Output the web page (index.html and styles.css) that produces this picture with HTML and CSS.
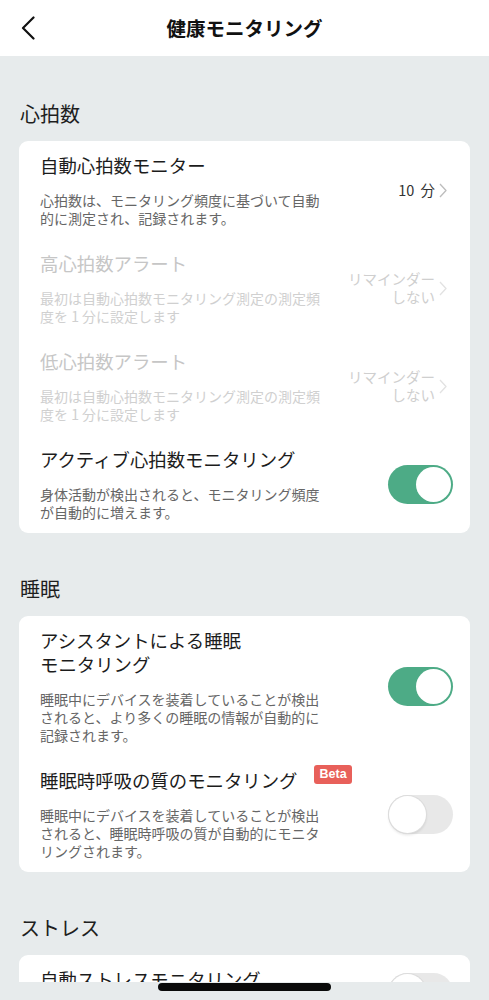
FILE: index.html
```html
<!DOCTYPE html>
<html lang="ja">
<head>
<meta charset="utf-8">
<title>健康モニタリング</title>
<link rel="stylesheet" href="styles.css">
</head>
<body>
<div class="page">
  <header class="topbar">
    <span class="back">
      <svg width="14" height="24" viewBox="0 0 14 24"><path d="M12.5 1.5 L2 12 L12.5 22.5" fill="none" stroke="#111" stroke-width="2.2" stroke-linecap="round" stroke-linejoin="round"/></svg>
    </span>
    <h1 class="title">健康モニタリング</h1>
  </header>

  <main class="content">
    <section class="section">
      <h2 class="section-title">心拍数</h2>
      <div class="card">
        <div class="item">
          <div class="item-main">
            <div class="item-title">自動心拍数モニター</div>
            <div class="item-desc">心拍数は、モニタリング頻度に基づいて自動的に測定され、記録されます。</div>
          </div>
          <div class="item-side">
            <span class="value">10 分</span>
            <svg class="chev" width="8" height="15" viewBox="0 0 8 15"><path d="M1 1 L7 7.5 L1 14" fill="none" stroke="#bdbdbd" stroke-width="1.3" stroke-linejoin="round"/></svg>
          </div>
        </div>
        <div class="item disabled">
          <div class="item-main">
            <div class="item-title">高心拍数アラート</div>
            <div class="item-desc">最初は自動心拍数モニタリング測定の測定頻度を 1 分に設定します</div>
          </div>
          <div class="item-side">
            <span class="value two">リマインダー<br>しない</span>
            <svg class="chev" width="8" height="15" viewBox="0 0 8 15"><path d="M1 1 L7 7.5 L1 14" fill="none" stroke="#e2e2e2" stroke-width="1.3" stroke-linejoin="round"/></svg>
          </div>
        </div>
        <div class="item disabled">
          <div class="item-main">
            <div class="item-title">低心拍数アラート</div>
            <div class="item-desc">最初は自動心拍数モニタリング測定の測定頻度を 1 分に設定します</div>
          </div>
          <div class="item-side">
            <span class="value two">リマインダー<br>しない</span>
            <svg class="chev" width="8" height="15" viewBox="0 0 8 15"><path d="M1 1 L7 7.5 L1 14" fill="none" stroke="#e2e2e2" stroke-width="1.3" stroke-linejoin="round"/></svg>
          </div>
        </div>
        <div class="item">
          <div class="item-main">
            <div class="item-title">アクティブ心拍数モニタリング</div>
            <div class="item-desc">身体活動が検出されると、モニタリング頻度が自動的に増えます。</div>
          </div>
          <div class="item-side">
            <span class="toggle on"><span class="knob"></span></span>
          </div>
        </div>
      </div>
    </section>

    <section class="section">
      <h2 class="section-title">睡眠</h2>
      <div class="card">
        <div class="item">
          <div class="item-main">
            <div class="item-title">アシスタントによる睡眠<br>モニタリング</div>
            <div class="item-desc">睡眠中にデバイスを装着していることが検出されると、より多くの睡眠の情報が自動的に記録されます。</div>
          </div>
          <div class="item-side">
            <span class="toggle on"><span class="knob"></span></span>
          </div>
        </div>
        <div class="item">
          <div class="item-main">
            <div class="item-title">睡眠時呼吸の質のモニタリング<span class="badge">Beta</span></div>
            <div class="item-desc">睡眠中にデバイスを装着していることが検出されると、睡眠時呼吸の質が自動的にモニタリングされます。</div>
          </div>
          <div class="item-side">
            <span class="toggle"><span class="knob"></span></span>
          </div>
        </div>
      </div>
    </section>

    <section class="section">
      <h2 class="section-title">ストレス</h2>
      <div class="card">
        <div class="item item-last">
          <div class="item-main">
            <div class="item-title">自動ストレスモニタリング</div>
          </div>
          <div class="item-side">
            <span class="toggle"><span class="knob"></span></span>
          </div>
        </div>
      </div>
    </section>
  </main>

  <div class="home-bar"><span class="home-indicator"></span></div>
</div>
</body>
</html>
```

FILE: styles.css
```css
* {
  box-sizing: border-box;
}

html, body {
  margin: 0;
  padding: 0;
  height: 100%;
  overflow: hidden;
}

body {
  background: #e7ebec;
  font-family: "Noto Sans CJK JP", "Noto Sans", sans-serif;
  color: #1c1c1c;
}

.page {
  height: 1000px;
  overflow: hidden;
}

.topbar {
  height: 56px;
  background: #ffffff;
  display: flex;
  align-items: center;
  justify-content: center;
  position: relative;
}

.back {
  position: absolute;
  left: 21px;
  top: 16px;
  width: 14px;
  height: 24px;
  display: flex;
}

.title {
  margin: 0;
  font-size: 19.5px;
  font-weight: 700;
  line-height: 28px;
  color: #111;
}

.content {
  padding: 0 19px;
}

.section {
  padding-top: 44px;
}

.section + .section {
  padding-top: 42px;
}

.section-title {
  margin: 0 0 13px 1px;
  font-size: 20px;
  font-weight: 400;
  line-height: 28px;
  color: #1e1e1e;
}

.card {
  background: #ffffff;
  border-radius: 9px;
}

.item {
  display: flex;
  align-items: center;
  padding: 12px 17px 12px 21px;
}

.item-last {
  align-items: flex-start;
  padding-bottom: 40px;
}

.item-last .item-side {
  margin-top: 6px;
}

.item-main {
  flex: 1;
  min-width: 0;
}

.item-title {
  font-size: 18.4px;
  line-height: 24px;
  color: #1c1c1c;
  display: flex;
  align-items: center;
  flex-wrap: wrap;
}

.item-desc {
  margin-top: 14px;
  max-width: 284px;
  font-size: 14px;
  line-height: 18px;
  color: #666;
}

.disabled .item-title {
  color: #c6c6c6;
}

.disabled .item-desc {
  color: #d0d0d0;
}

.item-side {
  display: flex;
  align-items: center;
  gap: 4px;
  flex-shrink: 0;
}

.value {
  font-size: 14.5px;
  line-height: 18px;
  color: #333;
  text-align: right;
  word-spacing: 3px;
}

.value.two {
  line-height: 18px;
}

.disabled .value {
  color: #cfcfcf;
}

.chev {
  margin-right: 6px;
  display: block;
}

.badge {
  display: inline-block;
  margin-left: 17px;
  margin-top: -12px;
  padding: 0 5px;
  height: 19px;
  line-height: 19px;
  background: #e8605a;
  color: #fff;
  border-radius: 3px;
  font-family: "Liberation Sans", Arial, sans-serif;
  font-weight: 700;
  font-size: 12.5px;
}

.toggle {
  display: flex;
  align-items: center;
  width: 65px;
  height: 39px;
  border-radius: 20px;
  background: #e8e8e8;
  padding: 1px;
}

.toggle .knob {
  width: 37px;
  height: 37px;
  border-radius: 50%;
  background: #fff;
  box-shadow: 0 0 0 1px #dcdcdc, 0 2px 3px rgba(0, 0, 0, 0.12);
}

.toggle.on {
  background: #4dab86;
  padding: 2px;
  justify-content: flex-end;
}

.toggle.on .knob {
  width: 35px;
  height: 35px;
  box-shadow: none;
}

.home-bar {
  position: fixed;
  left: 0;
  right: 0;
  bottom: 0;
  height: 18px;
  background: #e7ebec;
  display: flex;
  justify-content: center;
  padding-top: 1px;
}

.home-indicator {
  width: 173px;
  height: 8px;
  border-radius: 4px;
  background: #0a0a0a;
}
```
